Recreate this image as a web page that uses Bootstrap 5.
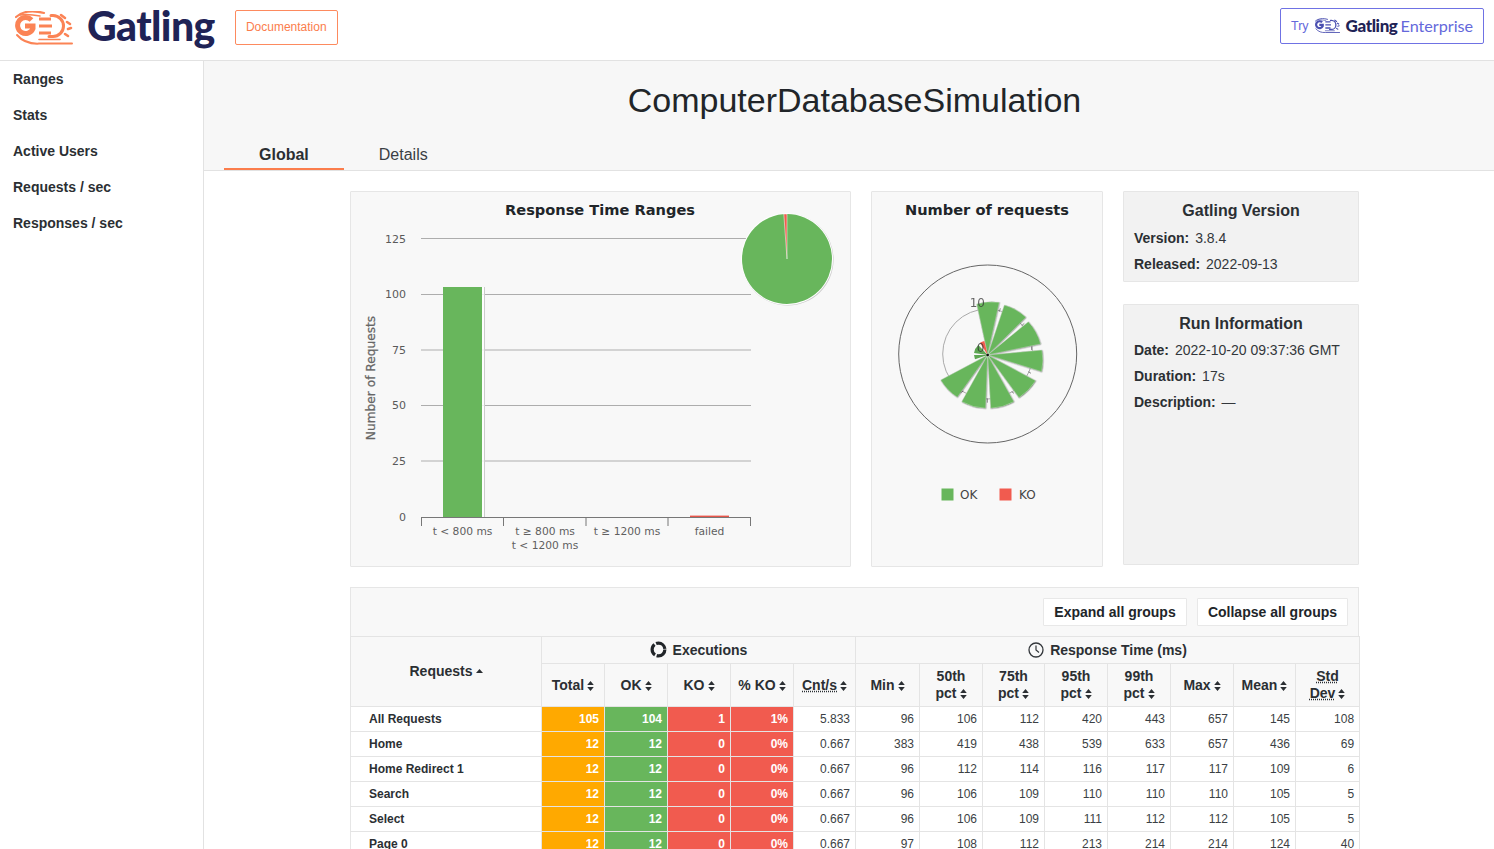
<!DOCTYPE html>
<html lang="en">
<head>
  <meta charset="UTF-8">
  <meta name="viewport" content="width=device-width, initial-scale=1.0">
  <link href="https://cdn.jsdelivr.net/npm/bootstrap@5.3.1/dist/css/bootstrap.min.css" rel="stylesheet">
  <title>Gatling Stats - Global Information</title>
  <style>
    html, body { height: 100%; overflow: hidden; }
    body { font-family: "Liberation Sans", Arial, sans-serif; color: #212529; background: #fff; }
    .top-bar { height: 61px; border-bottom: 1px solid #e2e2e2; padding: 0 10px 0 15px; }
    .logo-mark { color: #fb8355; margin-top: -4px; }
    .logo-word { font-family: Lato, sans-serif; font-weight: 900; font-size: 41px; line-height: 50px; color: #1f2356; margin: -8px 20px 0 14px; letter-spacing: -.6px; }
    .doc-btn { width: 103px; height: 35px; border: 1px solid #fd8a5e; color: #fb7d4c; font-size: 12px; border-radius: 2px; padding: 0; line-height: 33px; margin-top: -6px; }
    .doc-btn:hover { color: #fb7d4c; border-color: #fd8a5e; background: none; }
    .ent-btn { width: 204px; height: 36px; border: 1px solid #6f72e4; border-radius: 2px; color: #6468db; margin-top: -8px; padding: 0 0 0 10px; }
    .ent-try { font-size: 12.5px; margin-right: 6px; }
    .ent-mark { color: #4a4fb0; }
    .ent-name { font-family: Lato, sans-serif; font-weight: 900; font-size: 17px; color: #1f2356; margin: 0 3px 0 6px; letter-spacing: -.4px; }
    .ent-word { font-family: Lato, sans-serif; font-size: 16.2px; color: #6468db; }
    .page-wrap { height: calc(100vh - 61px); }
    .side-menu { width: 204px; flex: none; border-right: 1px solid #e2e2e2; padding-top: 0; }
    .side-menu .nav-link { font-weight: 700; font-size: 14px; color: #2b2f33; padding: 0 13px; height: 36px; line-height: 36px; }
    .main-area { flex: 1 1 auto; min-width: 0; }
    .main-head { height: 110px; background: #f7f7f7; border-bottom: 1px solid #e2e2e2; }
    .page-title { width: 1009px; margin: 0 0 0 146px; height: 80px; line-height: 79px; font-size: 34px; font-weight: 400; text-align: center; color: #212529; }
    .head-tabs { padding-left: 20px; }
    .head-tab { padding: 0 35px; height: 29px; line-height: 27px; font-size: 16px; color: #3b3f44; display: block; text-decoration: none; }
    .head-tab.on { font-weight: 700; color: #2b2f33; border-bottom: 2px solid #fb7d4c; }
    .content-box { width: 1009px; margin: 20px 0 0 146px; }
    .chart-row { gap: 20px; }
    .chart-card { background: #f8f8f8; border: 1px solid #e6e6e6; border-radius: 1px; height: 376px; flex: none; }
    .chart-wide { width: 501px; }
    .chart-narrow { width: 232px; }
    .chart-card svg { display: block; }
    .chart-text { font-family: "DejaVu Sans", sans-serif; }
    .info-card { background: #f2f2f2; border: 1px solid #e6e6e6; border-radius: 1px; width: 236px; padding: 9px 10px; font-size: 14px; color: #33373b; }
    .info-card h3 { font-size: 16px; font-weight: 700; text-align: center; margin: 0 0 4px; line-height: 20px; color: #2b2f33; }
    .info-card p { margin: 0; height: 26px; line-height: 26px; }
    .info-card b { margin-right: 2px; color: #2b2f33; }
    .info-one { height: 91px; margin-bottom: 22px; }
    .info-two { height: 261px; }
    .info-two h3 { margin-bottom: 3px; }
    .stats-panel { margin-top: 20px; background: #f8f8f8; border: 1px solid #e6e6e6; border-bottom: 0; }
    .btn-row { height: 48px; padding-right: 10px; }
    .group-btn { background: #fff; border: 1px solid #e8e8e8; border-radius: 1px; height: 28px; padding: 0; line-height: 26px; font-size: 14px; font-weight: 700; color: #212529; }
    .group-btn:hover { background: #fff; color: #212529; border-color: #e8e8e8; }
    .group-expand { width: 144px; margin-right: 10px; }
    .group-collapse { width: 151px; }
    .stats-table { table-layout: fixed; width: 1009px; margin: 0 0 0 -1px; border-collapse: collapse; font-size: 12px; --bs-table-bg: transparent; }
    .stats-table th, .stats-table td { border: 1px solid #e4e4e4; padding: 0 5px; vertical-align: middle; }
    .stats-table thead th { background: #f8f8f8; text-align: center; font-size: 14px; font-weight: 700; line-height: 17px; color: #2b2f33; }
    .stats-table .row-one th { height: 27px; }
    .stats-table .row-two th { height: 43px; padding: 0 1px; }
    .stats-table tbody td { height: 25px; text-align: right; background: #fff; color: #3b3f44; line-height: 14px; }
    .stats-table tbody td.req-name { text-align: left; font-weight: 700; padding-left: 18px; color: #2b2f33; border-left-color: transparent; }
    .stats-table td.cell-total, .stats-table td.cell-ok, .stats-table td.cell-ko { color: #fff; font-weight: 700; }
    .stats-table td.cell-total { background: #ffa900; }
    .stats-table td.cell-ok { background: #68b65c; }
    .stats-table td.cell-ko { background: #f15b4f; }
    .sort-ico { margin-left: 3px; vertical-align: -1px; }
    .sort-up { vertical-align: 3px; }
    .head-ico { vertical-align: -3px; margin-right: 2px; }
    abbr.dot-abbr { text-decoration: underline dotted; cursor: help; }
    .sym-holder { width: 0; height: 0; }
  </style>
</head>
<body>
  <svg class="sym-holder d-block position-absolute">
    <symbol id="sortIcon" viewBox="0 0 7 10">
      <path d="M3.5 0 L6.8 4 H.2Z M3.5 10 L.2 6 H6.8Z" fill="#2b2f33"/>
    </symbol>
    <symbol id="gatlingMark" viewBox="0 0 58 35">
      <g fill="none" stroke="currentColor" stroke-linecap="round">
        <path d="M1 6 C8 0 18 -1 29 2" stroke-width="2.2"/>
        <path d="M5 4 C10 3 15 3 25 5" stroke-width="1.4"/>
        <path d="M16.5 9 A8 8 0 1 0 18 17.5 V15 H10" stroke-width="5" stroke-linecap="butt"/>
        <path d="M36 8 H24 M24 15 H37 M36 22 H24" stroke-width="3.2" stroke-linecap="butt"/>
        <path d="M36 4.5 H38 A10.5 10.5 0 0 1 38 25.5 H34" stroke-width="3"/>
        <path d="M46 4 L50 7 M52 11 L55 13 M53 18 L56 17 M50 23 L53 25" stroke-width="2.6"/>
        <path d="M2 24 C8 31 15 33 24 32.6 H57" stroke-width="2"/>
        <path d="M24 28.5 H45" stroke-width="1.6"/>
      </g>
    </symbol>
  </svg>

  <header class="top-bar d-flex align-items-center">
    <svg width="58" height="35" class="logo-mark"><use href="#gatlingMark"/></svg>
    <span class="logo-word">Gatling</span>
    <a href="#" class="btn doc-btn">Documentation</a>
    <a href="#" class="btn ent-btn d-flex align-items-center ms-auto">
      <span class="ent-try">Try</span>
      <svg width="25" height="16" class="ent-mark"><use href="#gatlingMark"/></svg>
      <span class="ent-name">Gatling</span><span class="ent-word">Enterprise</span>
    </a>
  </header>

  <div class="page-wrap d-flex">
    <nav class="side-menu nav flex-column">
      <a class="nav-link" href="#ranges">Ranges</a>
      <a class="nav-link" href="#stats">Stats</a>
      <a class="nav-link" href="#users">Active Users</a>
      <a class="nav-link" href="#requests">Requests / sec</a>
      <a class="nav-link" href="#responses">Responses / sec</a>
    </nav>

    <main class="main-area">
      <div class="main-head">
        <h1 class="page-title">ComputerDatabaseSimulation</h1>
        <div class="head-tabs d-flex">
          <a href="#" class="head-tab on">Global</a>
          <a href="#" class="head-tab">Details</a>
        </div>
      </div>

      <div class="content-box">
        <div class="d-flex chart-row">
          <div class="chart-card chart-wide">
            <svg class="chart-text" width="499" height="374" viewBox="351 192 499 374">
              <text x="600" y="215" text-anchor="middle" font-size="14.6" font-weight="700" fill="#212529">Response Time Ranges</text>
              <g stroke="#adadad" stroke-width="1.2">
                <path d="M421 238.500H751M421 294.500H751M421 350H751M421 405.500H751M421 461H751"/>
              </g>
              <g font-size="11" fill="#5a5a5a" text-anchor="end">
                <text x="406" y="243">125</text>
                <text x="406" y="298">100</text>
                <text x="406" y="354">75</text>
                <text x="406" y="409">50</text>
                <text x="406" y="465">25</text>
                <text x="406" y="521">0</text>
              </g>
              <text transform="translate(375 378) rotate(-90)" text-anchor="middle" font-size="12.2" stroke="#666" stroke-width=".25" fill="#666">Number of Requests</text>
              <rect x="443" y="287" width="41" height="230" fill="#fff" opacity=".8"/>
              <rect x="484" y="287" width="1" height="230" fill="#ccc"/>
              <rect x="443" y="287" width="39" height="230" fill="#68b65c"/>
              <rect x="690" y="515.600" width="39" height="1.400" fill="#e8554a"/>
              <path d="M421 517.500H751M421.500 517V526M503.500 517V526M586 517V526M668 517V526M750.500 517V526" stroke="#777" stroke-width="1" fill="none"/>
              <g font-size="10.700" fill="#5f5f5f" text-anchor="middle">
                <text x="462.500" y="535">t &lt; 800 ms</text>
                <text x="545" y="535">t ≥ 800 ms</text>
                <text x="545" y="549">t &lt; 1200 ms</text>
                <text x="627" y="535">t ≥ 1200 ms</text>
                <text x="709.500" y="535">failed</text>
              </g>
              <circle cx="787.600" cy="259.600" r="46" fill="#000" opacity=".18"/>
              <circle cx="787" cy="259" r="46" fill="#fff"/>
              <circle cx="787" cy="259" r="45" fill="#68b65c"/>
              <path d="M787 259 L783.800 214 A45 45 0 0 1 787 214Z" fill="#f15b4f" stroke="#fff" stroke-width=".5"/>
            </svg>
          </div>

          <div class="chart-card chart-narrow">
            <svg class="chart-text" width="230" height="374" viewBox="872 192 230 374">
              <text x="987" y="215" text-anchor="middle" font-size="14.6" font-weight="700" fill="#212529">Number of requests</text>
              <circle cx="987.700" cy="354" r="89" fill="none" stroke="#666" stroke-width="1"/>
              <circle cx="987.700" cy="354" r="45" fill="none" stroke="#aaa" stroke-width="1"/>
              <g transform="translate(870 240) scale(.33333)">
                <g fill="#68b65c" stroke="#fff" stroke-width="1" style="filter:drop-shadow(1px 1px 2px rgba(0,0,0,.55))">
                  <path d="M353 345 L320 192 A157 157 0 0 1 388 187Z"/>
                  <path d="M353 345 L403 195 A158 158 0 0 1 468 232Z"/>
                  <path d="M353 345 L475 245 A158 158 0 0 1 512 312Z"/>
                  <path d="M353 345 L516 330 A164 164 0 0 1 515 395Z"/>
                  <path d="M353 345 L497 422 A163 163 0 0 1 447 473Z"/>
                  <path d="M353 345 L432 485 A160 160 0 0 1 362 505Z"/>
                  <path d="M353 345 L347 505 A160 160 0 0 1 275 485Z"/>
                  <path d="M353 345 L262 472 A160 160 0 0 1 212 420Z"/>
                </g>
                <path d="M353 345 L330 308 A43 43 0 0 1 343 303Z" fill="#f15b4f"/>
                <path d="M353 345 L312 339 A41 41 0 0 1 325 315Z" fill="#5da652"/>
                <path d="M353 345 L312 345 L315 358Z" fill="#5da652"/>
                <path d="M388 215 L391 205M455 257 L463 250M485 320 L485 330M475 395 L483 400M425 455 L432 460M352 475 V488M280 453 L272 458" stroke="#555" stroke-width="2"/>
                <circle cx="353" cy="345" r="4" fill="#111"/>
                <text x="322" y="202" font-size="36" fill="#333" opacity=".75" text-anchor="middle">10</text>
                <text x="332" y="336" font-size="36" fill="#333" opacity=".75" text-anchor="middle">0</text>
              </g>
              <rect x="941.500" y="488.500" width="12" height="12" fill="#68b65c"/>
              <text x="960" y="499" font-size="12" fill="#444">OK</text>
              <rect x="999.500" y="488.500" width="12" height="12" fill="#f15b4f"/>
              <text x="1019" y="499" font-size="12" fill="#444">KO</text>
            </svg>
          </div>

          <div>
            <div class="info-card info-one">
              <h3>Gatling Version</h3>
              <p><b>Version:</b> 3.8.4</p>
              <p><b>Released:</b> 2022-09-13</p>
            </div>
            <div class="info-card info-two">
              <h3>Run Information</h3>
              <p><b>Date:</b> 2022-10-20 09:37:36 GMT</p>
              <p><b>Duration:</b> 17s</p>
              <p><b>Description:</b> —</p>
            </div>
          </div>
        </div>

        <div class="stats-panel">
          <div class="btn-row d-flex align-items-center justify-content-end">
            <button type="button" class="btn group-btn group-expand">Expand all groups</button>
            <button type="button" class="btn group-btn group-collapse">Collapse all groups</button>
          </div>
          <table class="table stats-table">
            <colgroup id="tableCols"></colgroup>
            <thead>
              <tr class="row-one">
                <th rowspan="2">Requests<svg class="sort-ico sort-up" width="7" height="4" viewBox="0 0 7 4"><path d="M3.5 0 L7 4 H0Z" fill="#2b2f33"/></svg></th>
                <th colspan="5">
                  <svg class="head-ico" width="17" height="17" viewBox="0 0 16 16"><circle cx="8" cy="8" r="6" fill="none" stroke="#212529" stroke-width="3" stroke-dasharray="11 1.6"/></svg>
                  Executions</th>
                <th colspan="8">
                  <svg class="head-ico" width="16" height="16" viewBox="0 0 16 16" fill="none" stroke="#33373b"><circle cx="8" cy="8" r="7" stroke-width="1.3"/><path d="M8 3.500V8L11 10.500" stroke-width="1.2"/></svg>
                  Response Time (ms)</th>
              </tr>
              <tr class="row-two" id="headRow"></tr>
            </thead>
            <tbody id="statsBody"></tbody>
          </table>
        </div>
      </div>
    </main>
  </div>

  <script>
    const colWidths = [191, 63, 63, 63, 63, 62, 64, 63, 62, 63, 63, 63, 62, 64];
    document.getElementById("tableCols").innerHTML = colWidths.map(w => `<col style="width:${w}px">`).join("");

    const sortIcon = '<svg class="sort-ico" width="7" height="10"><use href="#sortIcon"/></svg>';
    const heads = ["Total", "OK", "KO", "% KO", '<abbr class="dot-abbr" title="Count of events per second">Cnt/s</abbr>', "Min",
      "50th<br>pct", "75th<br>pct", "95th<br>pct", "99th<br>pct", "Max", "Mean",
      '<abbr class="dot-abbr" title="Standard Deviation">Std<br>Dev</abbr>'];
    document.getElementById("headRow").innerHTML = heads.map(h => `<th>${h}${sortIcon}</th>`).join("");

    const stats = [
      ["All Requests", 105, 104, 1, "1%", "5.833", 96, 106, 112, 420, 443, 657, 145, 108],
      ["Home", 12, 12, 0, "0%", "0.667", 383, 419, 438, 539, 633, 657, 436, 69],
      ["Home Redirect 1", 12, 12, 0, "0%", "0.667", 96, 112, 114, 116, 117, 117, 109, 6],
      ["Search", 12, 12, 0, "0%", "0.667", 96, 106, 109, 110, 110, 110, 105, 5],
      ["Select", 12, 12, 0, "0%", "0.667", 96, 106, 109, 111, 112, 112, 105, 5],
      ["Page 0", 12, 12, 0, "0%", "0.667", 97, 108, 112, 213, 214, 214, 124, 40]
    ];
    const cellClass = { 1: "cell-total", 2: "cell-ok", 3: "cell-ko", 4: "cell-ko" };
    document.getElementById("statsBody").innerHTML = stats.map(row =>
      "<tr>" + row.map((v, i) => {
        const cls = i === 0 ? "req-name" : (cellClass[i] || "");
        return `<td class="${cls}">${v}</td>`;
      }).join("") + "</tr>"
    ).join("");
  </script>
  <script src="https://cdn.jsdelivr.net/npm/bootstrap@5.3.1/dist/js/bootstrap.bundle.min.js"></script>
</body>
</html>
